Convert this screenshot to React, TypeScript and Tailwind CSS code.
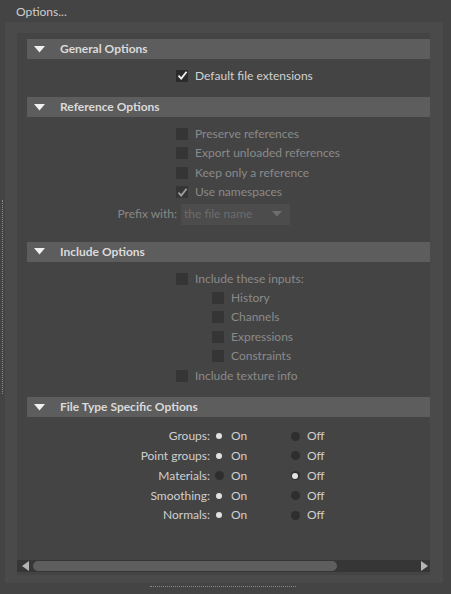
import React from "react";

const Tri = () => (
  <svg width="11" height="7" viewBox="0 0 11 7" className="block">
    <polygon points="0,0 11,0 5.5,6.5" fill="#f0f0f0" />
  </svg>
);

const Header = ({ title }: { title: string }) => (
  <div className="h-[20px] bg-[#5d5d5d] flex items-center">
    <div className="pl-[7px] w-[33px]">
      <Tri />
    </div>
    <span className="text-[12px] font-bold text-[#dadada] leading-none">{title}</span>
  </div>
);

const Check = ({ checked, disabled }: { checked?: boolean; disabled?: boolean }) => (
  <div
    className={
      "w-[12px] h-[12px] flex items-center justify-center shrink-0 " +
      (disabled ? "bg-[#353535]" : "bg-[#2b2b2b]")
    }
  >
    {checked && (
      <svg width="11" height="11" viewBox="0 0 11 11">
        <polyline
          points="1.5,5.6 4.2,8.6 9.6,1.8"
          fill="none"
          stroke={disabled ? "#a0a0a0" : "#f2f2f2"}
          strokeWidth="1.8"
        />
      </svg>
    )}
  </div>
);

const CheckRow = ({
  label,
  checked,
  disabled,
  indent,
}: {
  label: string;
  checked?: boolean;
  disabled?: boolean;
  indent?: boolean;
}) => (
  <div className={"h-[19.4px] flex items-center " + (indent ? "pl-[185px]" : "pl-[149px]")}>
    <Check checked={checked} disabled={disabled} />
    <span
      className={
        "ml-[7px] text-[12px] leading-none " + (disabled ? "text-[#8a8a8a]" : "text-[#d2d2d2]")
      }
    >
      {label}
    </span>
  </div>
);

const Radio = ({ on, ring }: { on: boolean; ring?: boolean }) => (
  <div className="w-[12px] h-[12px] flex items-center justify-center shrink-0">
    {on ? (
      <div
        className={
          "w-[9px] h-[9px] rounded-full flex items-center justify-center " +
          (ring ? "bg-[#303030]" : "bg-[#464646]")
        }
      >
        <div className="w-[6px] h-[6px] rounded-full bg-[#e2e2e2]" />
      </div>
    ) : (
      <div className="w-[9px] h-[9px] rounded-full bg-[#2e2e2e]" />
    )}
  </div>
);

const RadioRow = ({ label, on }: { label: string; on: boolean }) => (
  <div className="h-[19.8px] flex items-center text-[12px] leading-none text-[#cfcfcf]">
    <div className="w-[183px] text-right">{label}</div>
    <div className="ml-[3px]">
      <Radio on={on} />
    </div>
    <div className="ml-[6px] w-[58px]">On</div>
    <Radio on={!on} ring />
    <div className="ml-[6px]">Off</div>
  </div>
);

export default function App() {
  return (
    <div
      className="w-[451px] h-[594px] bg-[#444444] relative overflow-hidden flex flex-col"
      style={{ fontFamily: 'Lato, "Open Sans", sans-serif' }}
    >
      <div className="h-[22px] pl-[16px] pt-[6px] text-[12px] leading-none text-[#cdcdcd]">
        Options...
      </div>
      <div className="ml-[5px] w-[438px] h-[561px] bg-[#4a4a4a] pl-[12px] pr-[13px] pt-[11px] pb-[8px] flex">
        <div className="flex-1 bg-[#444444] flex flex-col">
          <div className="flex-1 pl-[10px] pt-[6px]">
            <Header title="General Options" />
            <div className="pt-[7px] pb-[12px]">
              <CheckRow label="Default file extensions" checked />
            </div>
            <Header title="Reference Options" />
            <div className="pt-[7px] pb-[17px]">
              <CheckRow label="Preserve references" disabled />
              <CheckRow label="Export unloaded references" disabled />
              <CheckRow label="Keep only a reference" disabled />
              <CheckRow label="Use namespaces" checked disabled />
              <div className="h-[21px] mt-[2px] flex items-center">
                <div className="w-[150px] text-right text-[12px] leading-none text-[#888888]">
                  Prefix with:
                </div>
                <div className="ml-[4px] w-[109px] h-[21px] bg-[#4c4c4c] flex items-center pl-[3px] pr-[8px]">
                  <span className="flex-1 text-[12px] leading-none text-[#6c6c6c]">the file name</span>
                  <svg width="10" height="6" viewBox="0 0 10 6">
                    <polygon points="0,0 10,0 5,5.5" fill="#6e6e6e" />
                  </svg>
                </div>
              </div>
            </div>
            <Header title="Include Options" />
            <div className="pt-[7px] pb-[12px]">
              <CheckRow label="Include these inputs:" disabled />
              <CheckRow label="History" disabled indent />
              <CheckRow label="Channels" disabled indent />
              <CheckRow label="Expressions" disabled indent />
              <CheckRow label="Constraints" disabled indent />
              <CheckRow label="Include texture info" disabled />
            </div>
            <Header title="File Type Specific Options" />
            <div className="pt-[9px]">
              <RadioRow label="Groups:" on />
              <RadioRow label="Point groups:" on />
              <RadioRow label="Materials:" on={false} />
              <RadioRow label="Smoothing:" on />
              <RadioRow label="Normals:" on />
            </div>
          </div>
          <div className="h-[12px] bg-[#363636] flex items-center mb-[3px]">
            <div className="w-[16px] flex items-center justify-center">
              <svg width="7" height="10" viewBox="0 0 7 10">
                <polygon points="7,0 7,10 0,5" fill="#b4b4b4" />
              </svg>
            </div>
            <div className="w-[304px] h-[10px] rounded-full bg-[#5e5e5e]" />
            <div className="flex-1" />
            <div className="w-[12px] flex items-center justify-center">
              <svg width="7" height="10" viewBox="0 0 7 10">
                <polygon points="0,0 0,10 7,5" fill="#b4b4b4" />
              </svg>
            </div>
          </div>
        </div>
      </div>
      <div className="absolute left-[2px] top-[200px] h-[194px] border-l border-dotted border-[#8a8a8a]" />
      <div className="absolute left-[150px] top-[586px] w-[146px] border-t border-dotted border-[#8a8a8a]" />
    </div>
  );
}
